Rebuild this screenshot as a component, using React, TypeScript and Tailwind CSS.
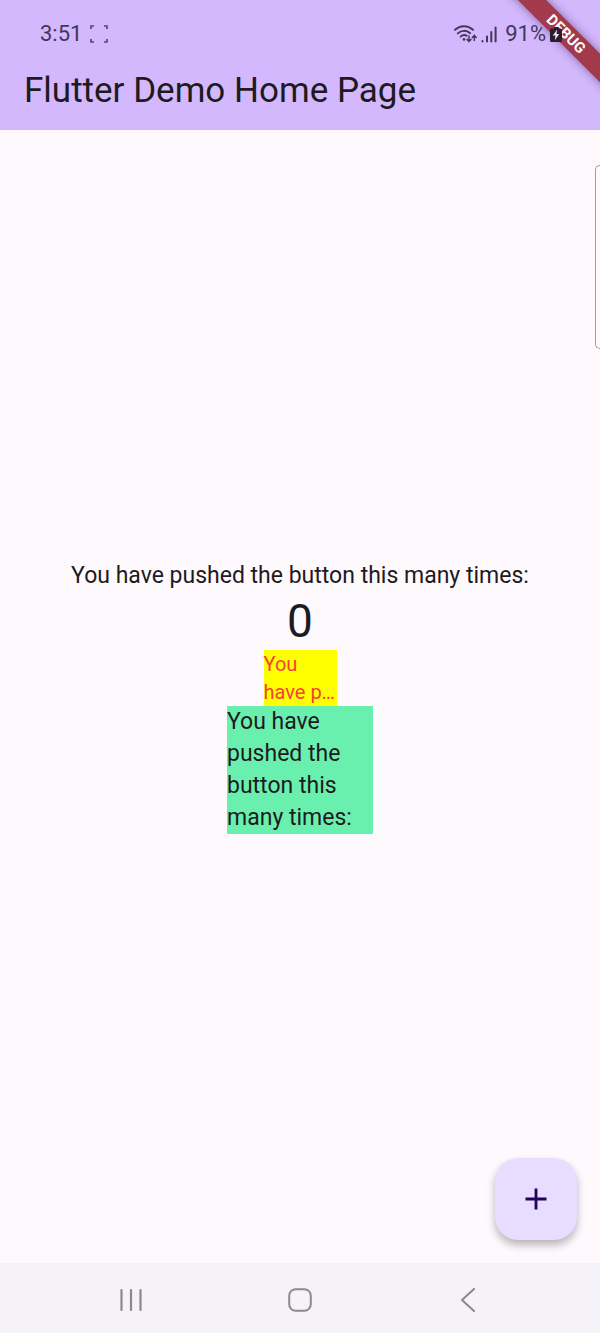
import { useState } from "react";

const message = "You have pushed the button this many times:";
const shortMessage = "You have p…";

function CaptureIcon() {
  return (
    <svg width="18" height="18" viewBox="0 0 18 18" fill="none" stroke="#5a4a6e" strokeWidth="1.7" aria-hidden="true">
      <path d="M1 4V1H4M14 1H17V4M17 14V17H14M4 17H1V14" />
    </svg>
  );
}

function WifiIcon() {
  return (
    <svg width="23" height="18" viewBox="0 0 23 18" fill="none" stroke="#44365a" strokeWidth="1.9" strokeLinecap="round" aria-hidden="true">
      <path d="M1 4.800C6.200 0 13.800 0 19 4.800" />
      <path d="M3.800 8.400C7.300 5 12.700 5 16.200 8.200" />
      <path d="M6.600 11.600C8.500 9.800 11 9.600 12.800 10.800" />
      <circle cx="10" cy="14.400" r="1.300" fill="#44365a" stroke="none" />
      <path d="M15 11V16.200M13 14.400L15 16.500L17 14.400" strokeWidth="1.500" />
      <path d="M20.300 15.500V10.600M18.400 12.400L20.300 10.400L22.200 12.400" strokeWidth="1.500" />
    </svg>
  );
}

function SignalIcon() {
  return (
    <svg width="16" height="17" viewBox="0 0 16 17" fill="none" stroke="#44365a" strokeWidth="2" strokeLinecap="round" aria-hidden="true">
      <path d="M1.500 15V15.600M6 10.500V15.600M10.300 6V15.600M14.600 1.500V15.600" />
    </svg>
  );
}

function BatteryIcon() {
  return (
    <svg width="12" height="16" viewBox="0 0 12 16" aria-hidden="true">
      <path d="M3.500 1H8.500V2.500H10.500Q12 2.500 12 4V14.500Q12 16 10.500 16H1.500Q0 16 0 14.500V4Q0 2.500 1.500 2.500H3.500Z" fill="#2b1c30" />
      <path d="M7.200 3.500L2.800 9.600H5.500L4.800 14.200L9.200 8H6.500Z" fill="#f3e6f8" />
    </svg>
  );
}

function DebugBanner() {
  return (
    <div className="pointer-events-none absolute top-0 right-0 h-24 w-24 overflow-hidden">
      <div className="absolute top-6 -right-[46px] flex h-5 w-40 rotate-45 items-center justify-center bg-[#a33a4c] text-[15px] leading-5 font-bold text-white shadow-[0_0_10px_rgba(40,20,70,0.5)]">
        DEBUG
      </div>
    </div>
  );
}

export default function App() {
  const [count, setCount] = useState(0);

  return (
    <div className="relative flex min-h-screen flex-col overflow-hidden bg-[#fef9fd] font-['Roboto',sans-serif] text-[#1d1b20]">
      <header className="relative bg-[#d3b8fe]">
        <DebugBanner />
        <div className="relative flex h-12 items-center justify-between pt-5 pr-[38px] pl-10 text-[22px] leading-7 text-[#44365a]">
          <div className="flex items-center gap-2">
            <span>3:51</span>
            <CaptureIcon />
          </div>
          <div className="flex items-center gap-1">
            <WifiIcon />
            <SignalIcon />
            <span className="ml-1">91%</span>
            <BatteryIcon />
          </div>
        </div>
        <h1 className="flex h-[82px] items-center px-6 pt-1 text-[35px] leading-[44px]">Flutter Demo Home Page</h1>
      </header>

      <main className="relative flex grow flex-col items-center justify-center">
        <p className="text-[23px] leading-8">{message}</p>
        <p className="text-[46px] leading-[58px]">{count}</p>
        <p className="w-[73px] bg-[#ffff00] text-[20px] leading-7 text-[#f44336]">{shortMessage}</p>
        <p className="w-[146px] bg-[#69f0ae] text-[23px] leading-8">{message}</p>

        <div className="absolute top-[35px] right-0 h-[184px] w-[5px] rounded-l-lg border border-r-0 border-[#a39da3]" />

        <button
          type="button"
          aria-label="Increment"
          onClick={() => setCount(count + 1)}
          className="absolute right-[23px] bottom-[23px] flex size-[82px] items-center justify-center rounded-[23px] bg-[#e9ddff] shadow-[0_5px_9px_rgba(0,0,0,0.28)]"
        >
          <svg width="22" height="22" viewBox="0 0 22 22" stroke="#22005d" strokeWidth="2.800" aria-hidden="true">
            <path d="M11 0.500V21.500M0.500 11H21.500" />
          </svg>
        </button>
      </main>

      <nav className="flex h-[70px] items-center justify-around bg-[#f5f3f7] px-[47px] pt-1">
        <button type="button" aria-label="Recent apps" className="flex w-12 justify-center">
          <svg width="24" height="24" viewBox="0 0 24 24" fill="none" stroke="#8c888e" strokeWidth="2.200" strokeLinecap="round">
            <path d="M2.500 2V22M12 2V22M21.500 2V22" />
          </svg>
        </button>
        <button type="button" aria-label="Home" className="flex w-12 justify-center">
          <svg width="24" height="24" viewBox="0 0 24 24" fill="none" stroke="#8c888e" strokeWidth="2">
            <rect x="1.200" y="1.200" width="21.600" height="21.600" rx="6.500" />
          </svg>
        </button>
        <button type="button" aria-label="Back" className="flex w-12 justify-center">
          <svg width="24" height="24" viewBox="0 0 24 24" fill="none" stroke="#8c888e" strokeWidth="2" strokeLinecap="round" strokeLinejoin="round">
            <path d="M17 1L5 12L17 23" />
          </svg>
        </button>
      </nav>
    </div>
  );
}
